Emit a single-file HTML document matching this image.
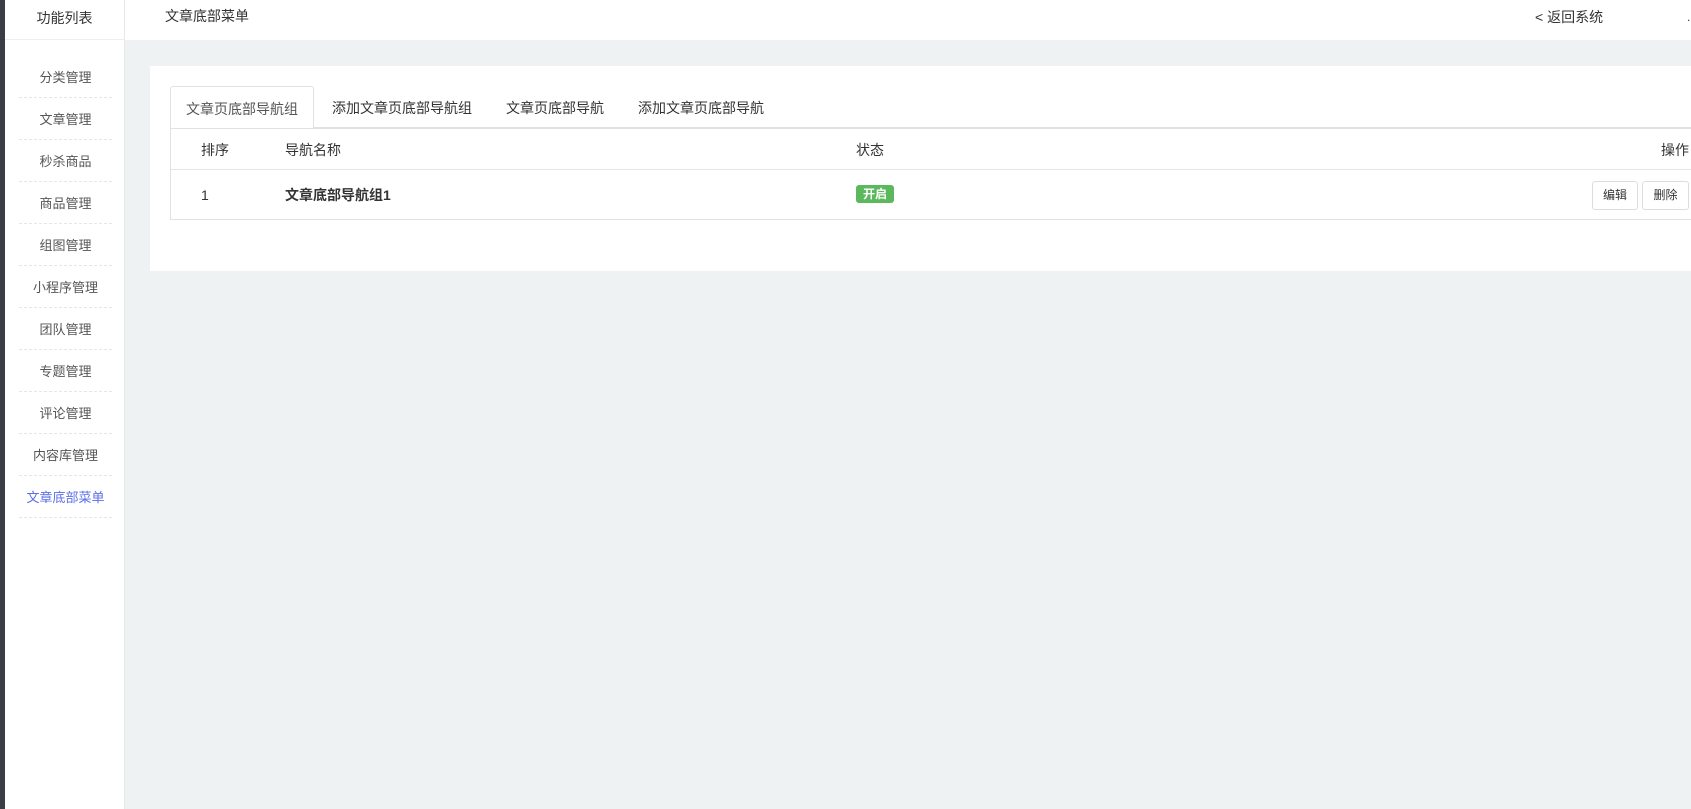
<!DOCTYPE html>
<html><head><meta charset="utf-8"><style>
*{margin:0;padding:0;box-sizing:border-box}
body{width:1691px;height:809px;overflow:hidden;background:#eff2f3;font-family:"Liberation Sans","Noto Sans CJK SC",sans-serif;color:#333;position:relative}
.abs{position:absolute}
.strip{left:0;top:0;width:5px;height:809px;background:#3a3d45}
.side{left:5px;top:0;width:120px;height:809px;background:#fff;border-right:1px solid #e8e8e8}
.side .t{height:40px;line-height:36px;text-align:center;font-size:14px;color:#333;border-bottom:1px solid #eee}
.side .it{position:absolute;left:14px;width:93px;height:42px;text-align:center;font-size:13px;color:#555;border-bottom:1px dashed #e6e6e6;line-height:44px}
.hdr{left:125px;top:0;width:1566px;height:40px;background:#fff}
.card{left:150px;top:66px;width:1541px;height:205px;background:#fff}
.tab{position:absolute;top:20px;height:42px;line-height:44px;font-size:14px;color:#333}
.tbl{position:absolute;left:20px;top:62px;width:1521px;height:92px;border:1px solid #e2e2e2;border-right:none}
</style></head><body>
<div class="abs strip"></div>
<div class="abs side">
<div class="t">功能列表</div>
<div class="it" style="top:56px">分类管理</div>
<div class="it" style="top:98px">文章管理</div>
<div class="it" style="top:140px">秒杀商品</div>
<div class="it" style="top:182px">商品管理</div>
<div class="it" style="top:224px">组图管理</div>
<div class="it" style="top:266px">小程序管理</div>
<div class="it" style="top:308px">团队管理</div>
<div class="it" style="top:350px">专题管理</div>
<div class="it" style="top:392px">评论管理</div>
<div class="it" style="top:434px">内容库管理</div>
<div class="it" style="top:476px;color:#5b6ee8">文章底部菜单</div>
</div>
<div class="abs hdr">
<div class="abs" style="left:40px;top:0;line-height:32px;font-size:14px">文章底部菜单</div>
<div class="abs" style="left:1410px;top:0;line-height:34px;font-size:14px">&lt; 返回系统</div>
<div class="abs" style="left:1562px;top:0;line-height:34px;font-size:12px">.</div>
</div>
<div class="abs card">
<div style="position:absolute;left:20px;top:61px;width:1521px;height:2px;background:#e2e2e2"></div>
<div class="tab" style="left:20px;width:144px;border:1px solid #e2e2e2;border-bottom:none;border-radius:3px 3px 0 0;background:#fff;text-align:center;color:#555;height:43px">文章页底部导航组</div>
<div class="tab" style="left:182px">添加文章页底部导航组</div>
<div class="tab" style="left:356px">文章页底部导航</div>
<div class="tab" style="left:488px">添加文章页底部导航</div>
<div class="tbl">
<div style="height:41px;border-bottom:1px solid #e6e6e6;font-size:14px;line-height:42px;position:relative">
<span class="abs" style="left:30px">排序</span><span class="abs" style="left:114px">导航名称</span><span class="abs" style="left:685px">状态</span><span class="abs" style="right:2px">操作</span></div>
<div style="height:50px;position:relative;font-size:14px;line-height:50px">
<span class="abs" style="left:30px">1</span><span class="abs" style="left:114px;font-weight:bold">文章底部导航组1</span>
<span class="abs" style="left:685px;top:15px;width:38px;height:18px;background:#5cb85c;color:#fff;border-radius:3px;font-size:12px;line-height:18px;text-align:center;font-weight:bold">开启</span>
<span class="abs" style="left:1421px;top:11px;width:46px;height:29px;border:1px solid #ddd;border-radius:3px;font-size:12px;line-height:27px;text-align:center">编辑</span>
<span class="abs" style="left:1471px;top:11px;width:47px;height:29px;border:1px solid #ddd;border-radius:3px;font-size:12px;line-height:27px;text-align:center">删除</span>
</div></div>
</div>
</body></html>
